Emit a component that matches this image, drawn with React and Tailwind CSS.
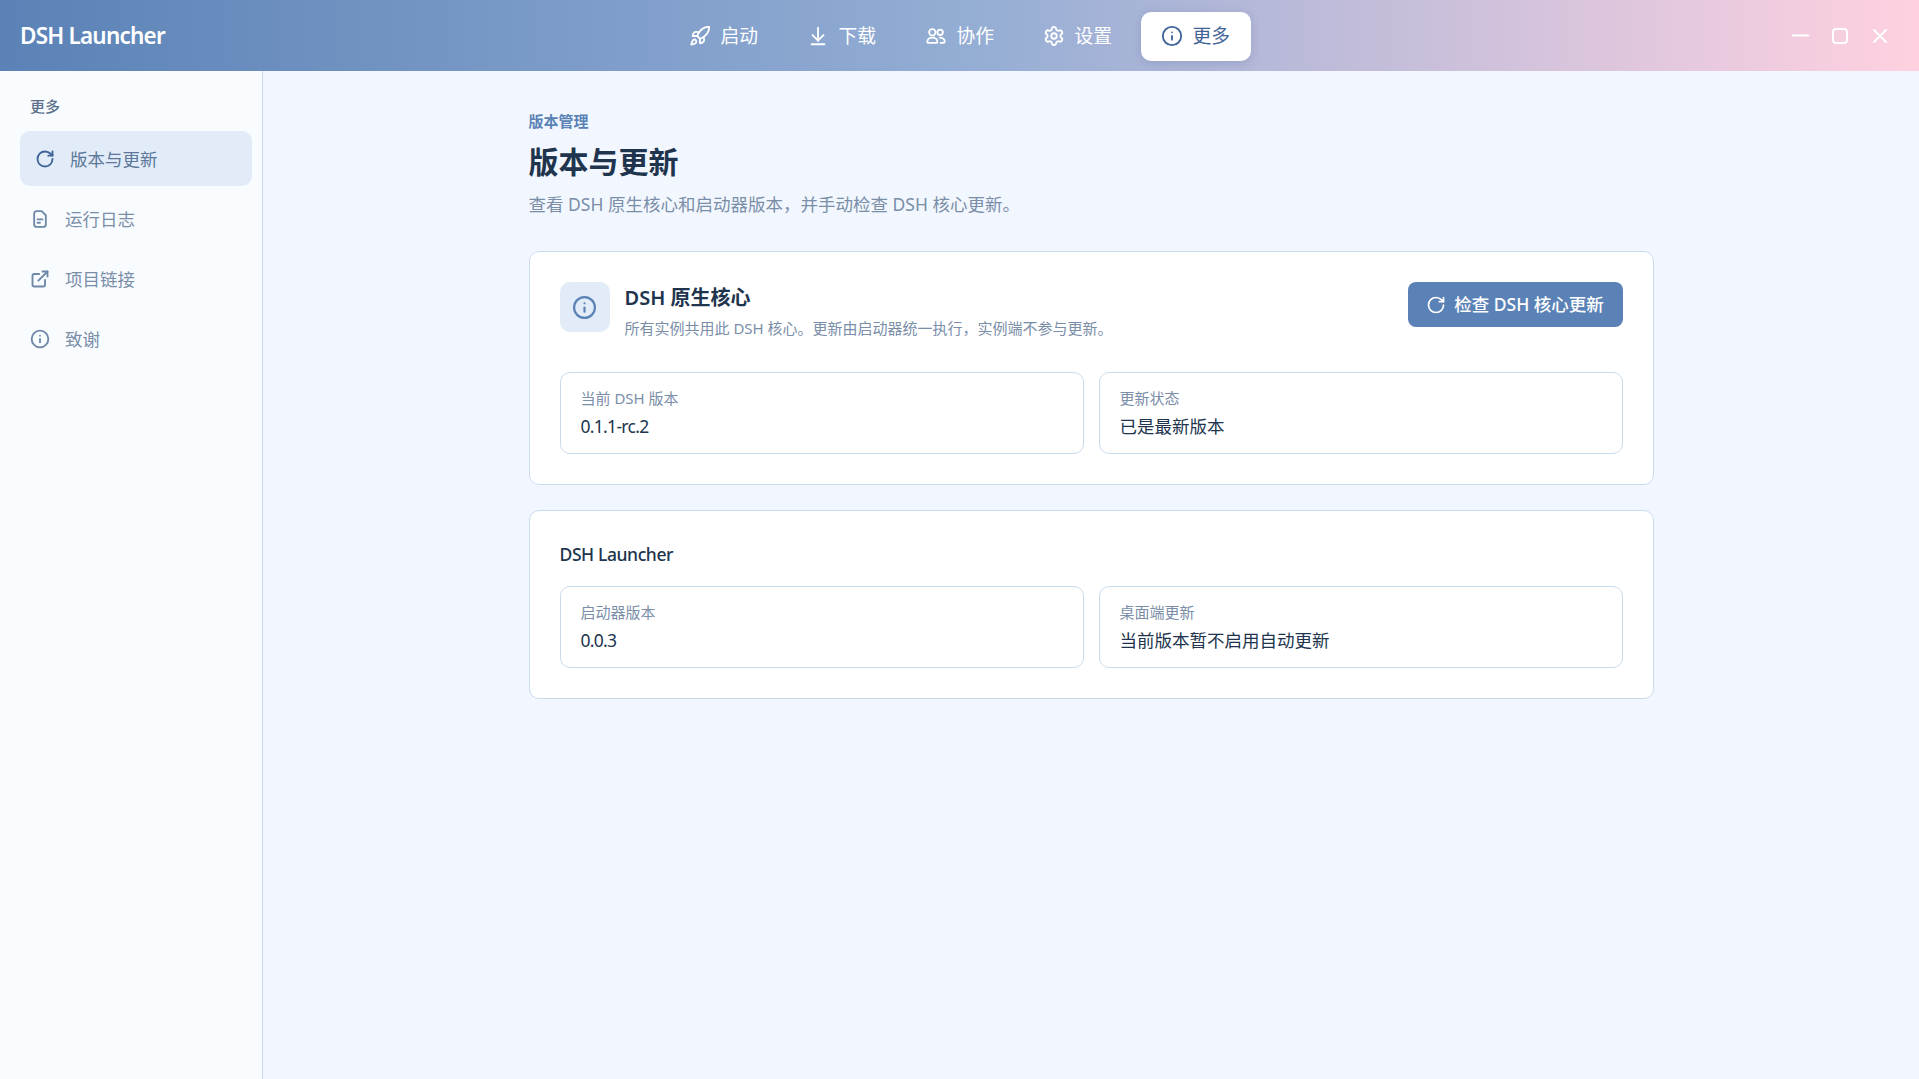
import React from "react";
import { Rocket, ArrowDownToLine, Settings, Info, RotateCw, ExternalLink, Minus, X } from "lucide-react";

const UsersIcon = ({ size = 22 }) => (
  <svg width={size} height={size} viewBox="0 0 24 24" fill="none" stroke="currentColor" strokeWidth="2" strokeLinecap="round" strokeLinejoin="round">
    <circle cx="8" cy="8" r="3.5" />
    <circle cx="16.5" cy="8" r="3" />
    <path d="M2.5 18.5c0-2.8 2.4-4.8 5.5-4.8s5.5 2 5.5 4.8c0 .7-.4 1-1 1h-9c-.6 0-1-.3-1-1z" />
    <path d="M16 13.7c3 0 5.5 1.8 5.5 4.3 0 1-.5 1.5-1.5 1.5h-3" />
  </svg>
);

const FileIcon = ({ size = 20 }) => (
  <svg width={size} height={size} viewBox="0 0 24 24" fill="none" stroke="currentColor" strokeWidth="2.2" strokeLinecap="round" strokeLinejoin="round">
    <path d="M14 2.5H8a3 3 0 0 0-3 3v13a3 3 0 0 0 3 3h8a3 3 0 0 0 3-3V7.5z" />
    <path d="M9 12.5h6" />
    <path d="M9 16.5h3" />
  </svg>
);

const navItems = [
  { label: "启动", icon: <Rocket size={22} strokeWidth={2} /> },
  { label: "下载", icon: <ArrowDownToLine size={22} strokeWidth={2} /> },
  { label: "协作", icon: <UsersIcon /> },
  { label: "设置", icon: <Settings size={22} strokeWidth={2} /> },
  { label: "更多", icon: <Info size={22} strokeWidth={2} />, active: true },
];

const sideItems = [
  { label: "版本与更新", icon: <RotateCw size={20} strokeWidth={2.25} />, active: true },
  { label: "运行日志", icon: <FileIcon /> },
  { label: "项目链接", icon: <ExternalLink size={20} strokeWidth={2.25} /> },
  { label: "致谢", icon: <Info size={20} strokeWidth={2.25} /> },
];

const StatBox = ({ label, value, latin }) => (
  <div className="h-[82px] rounded-[10px] border border-[#c9dcee] bg-white px-[20px] pt-[14px]">
    <div className="text-[15px] leading-[22px] text-[#7a8ea8]">{label}</div>
    <div className={latin ? "mt-[4px] text-[17.5px] leading-[26px] tracking-[-0.7px] text-[#21344d]" : "mt-[4px] text-[17.5px] leading-[26px] text-[#21344d]"}>
      {value}
    </div>
  </div>
);

const App = () => {
  return (
    <div
      className="flex h-screen w-full flex-col overflow-hidden bg-[#f2f7ff]"
      style={{ fontFamily: '"Noto Sans", "Noto Sans CJK SC", sans-serif' }}
    >
      {/* Title bar */}
      <header className="grid h-[71px] shrink-0 grid-cols-[1fr_auto_1fr] items-center bg-gradient-to-r from-[#5b82b6] via-[#93add4] to-[#ffd1e0]">
        <div className="pl-[20px] text-[22.5px] font-semibold tracking-[-0.8px] text-white">DSH Launcher</div>

        <nav className="mt-[1px] flex items-center gap-[8px]">
          {navItems.map((item) => (
            <div
              key={item.label}
              className={
                item.active
                  ? "flex h-[49px] w-[110px] items-center gap-[10px] rounded-[10px] bg-white pl-[20px] text-[#3f6497] shadow-[0_2px_10px_rgba(60,80,130,0.2)]"
                  : "flex h-[49px] w-[110px] items-center gap-[10px] rounded-[10px] pl-[20px] text-white"
              }
            >
              {item.icon}
              <span className="text-[18.75px]">{item.label}</span>
            </div>
          ))}
        </nav>

        {/* Window controls */}
        <div className="flex items-center justify-end pr-[19px] text-white">
          <div className="flex w-[40px] justify-center"><Minus size={27} strokeWidth={1.7} /></div>
          <div className="flex w-[40px] justify-center">
            <div className="h-[16px] w-[16px] rounded-[4px] border-2 border-white" />
          </div>
          <div className="flex w-[40px] justify-center"><X size={24} strokeWidth={2} /></div>
        </div>
      </header>

      <div className="flex min-h-0 flex-1">
        {/* Sidebar */}
        <aside className="w-[263px] shrink-0 border-r border-[#c9dcee] bg-[#f9fcff] px-[20px] pt-[24px]">
          <div className="pl-[10px] text-[15px] font-medium leading-[22px] text-[#5c708a]">更多</div>
          <div className="mt-[14px] flex w-[232px] flex-col gap-[5px]">
            {sideItems.map((item) => (
              <div
                key={item.label}
                className={
                  item.active
                    ? "flex h-[55px] items-center gap-[15px] rounded-[10px] bg-[#e1ecf8] pl-[15px] text-[#3f6497]"
                    : "flex h-[55px] items-center gap-[15px] pl-[10px] text-[#6f88a8]"
                }
              >
                {item.icon}
                <span className={item.active ? "mt-[2px] text-[17.5px] text-[#5c7799]" : "mt-[2px] text-[17.5px] text-[#7a8ea8]"}>{item.label}</span>
              </div>
            ))}
          </div>
        </aside>

        {/* Content */}
        <main className="flex min-w-0 flex-1 justify-center pt-[39px]">
          <div className="w-[1125px]">
            <div className="text-[15px] font-semibold leading-[22px] text-[#5b82b6]">版本管理</div>
            <h1 className="mt-[7px] text-[30px] font-bold leading-[45px] text-[#21344d]">版本与更新</h1>
            <p className="mt-[7px] text-[17.5px] leading-[26px] text-[#7a8ea8]">
              查看 DSH 原生核心和启动器版本&#xFF0C;并手动检查 DSH 核心更新。
            </p>

            <section className="mt-[34px] rounded-[10px] border border-[#c9dcee] bg-white p-[30px]">
              <div className="flex items-start justify-between">
                <div className="flex gap-[15px]">
                  <div className="flex h-[50px] w-[50px] items-center justify-center rounded-[10px] bg-[#e1ecf8] text-[#5b82b6]">
                    <Info size={25} strokeWidth={2.1} />
                  </div>
                  <div>
                    <div className="mt-[1px] text-[20px] font-semibold leading-[30px] text-[#21344d]">DSH 原生核心</div>
                    <div className="mt-[4px] text-[15px] leading-[22px] text-[#7a8ea8]">
                      所有实例共用此 DSH 核心。更新由启动器统一执行&#xFF0C;实例端不参与更新。
                    </div>
                  </div>
                </div>
                <button className="flex h-[45px] w-[215px] items-center justify-center gap-[8px] rounded-[8px] bg-[#5b82b6] text-[17.5px] font-medium text-white">
                  <RotateCw size={20} strokeWidth={2} />
                  检查 DSH 核心更新
                </button>
              </div>

              <div className="mt-[33px] grid grid-cols-2 gap-[15px]">
                <StatBox label="当前 DSH 版本" value="0.1.1-rc.2" latin />
                <StatBox label="更新状态" value="已是最新版本" />
              </div>
            </section>

            <section className="mt-[25px] rounded-[10px] border border-[#c9dcee] bg-white p-[30px]">
              <div className="text-[17.5px] font-medium leading-[26px] tracking-[-0.4px] text-[#21344d]">DSH Launcher</div>
              <div className="mt-[19px] grid grid-cols-2 gap-[15px]">
                <StatBox label="启动器版本" value="0.0.3" latin />
                <StatBox label="桌面端更新" value="当前版本暂不启用自动更新" />
              </div>
            </section>
          </div>
        </main>
      </div>
    </div>
  );
};

export default App;
